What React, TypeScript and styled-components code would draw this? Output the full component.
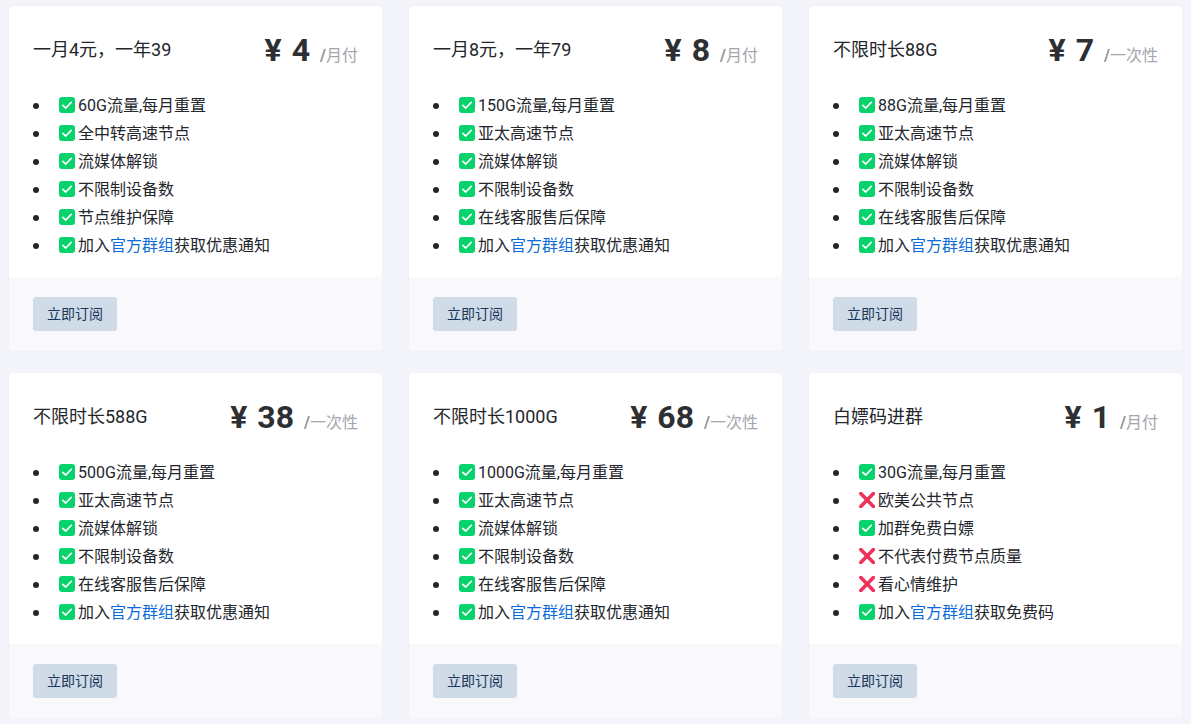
import React from "react";
import styled, { createGlobalStyle } from "styled-components";

const Global = createGlobalStyle`
  html, body { margin: 0; padding: 0; background: #f4f5fb; overflow: hidden; }
  body { font-family: Roboto, "Noto Sans CJK SC", sans-serif; color: #23262b; }
`;
const Page = styled.div`
  display: grid;
  grid-template-columns: repeat(3, 373px);
  column-gap: 27px;
  row-gap: 22px;
  padding: 6px 9px 0;
`;
const Card = styled.section`
  background: #fff;
  border-radius: 3px;
  box-shadow: 0 0 1px rgba(30, 40, 70, 0.18);
  display: flex;
  flex-direction: column;
  height: 345px;
  overflow: hidden;
`;
const Body = styled.div`
  flex: 1;
  padding: 24px 24px 0;
`;
const Header = styled.div`
  display: flex;
  justify-content: space-between;
  align-items: flex-start;
  height: 40px;
`;
const Title = styled.div`
  font-size: 18px;
  line-height: 40px;
  height: 40px;
`;
const Price = styled.div`
  display: flex;
  align-items: baseline;
  line-height: 40px;
`;
const Amount = styled.span`
  font-size: 32px;
  font-weight: 700;
  color: #2d2f33;
  word-spacing: 2px;
`;
const Period = styled.span`
  font-size: 16px;
  color: #a4a6ad;
  margin-left: 10px;
`;
const Slash = styled.span`
  font-weight: 700;
  color: #8f9198;
`;
const List = styled.ul`
  list-style: none;
  margin: 22px 0 0;
  padding: 0;
`;
const Item = styled.li`
  font-size: 16px;
  line-height: 28px;
  height: 28px;
  white-space: nowrap;
  &::before {
    content: "";
    display: inline-block;
    width: 6px;
    height: 6px;
    border-radius: 50%;
    background: #23262b;
    margin-right: 20px;
    vertical-align: 2px;
  }
`;
const Mark = styled.svg`
  width: 16px;
  height: 16px;
  margin-right: 3px;
  vertical-align: -2px;
`;
const GroupLink = styled.a`
  color: #0b6bdc;
  text-decoration: none;
`;
const Footer = styled.div`
  background: #f9f9fc;
  height: 74px;
  padding: 20px 24px 0;
  box-sizing: border-box;
`;
const Button = styled.button`
  display: block;
  width: 84px;
  height: 34px;
  border: 0;
  border-radius: 3px;
  background: #cfdbe6;
  color: #17365a;
  font-family: inherit;
  font-size: 14px;
  line-height: 32px;
  padding: 0 0 1px;
`;

const Check = () => (
  <Mark viewBox="0 0 16 16" aria-hidden>
    <rect x="0" y="0" width="16" height="16" rx="3" fill="#06d36b" />
    <path d="M3.8 8.3 6.8 11 12.2 5.3" fill="none" stroke="#fff" strokeWidth="1.7" strokeLinecap="round" strokeLinejoin="round" />
  </Mark>
);
const Cross = () => (
  <Mark viewBox="0 0 16 16" aria-hidden>
    <path d="M1.8 1.6 14.4 14.4M14.4 1.6 1.8 14.4" fill="none" stroke="#f0315c" strokeWidth="3.6" strokeLinecap="round" />
  </Mark>
);

type Feature = { no?: boolean; text: string } | { link: string };
const join = (tail: string): Feature => ({ link: tail });
const plans: { title: string; price: string; period: string; features: Feature[] }[] = [
  { title: "一月4元，一年39", price: "4", period: "月付", features: [{ text: "60G流量,每月重置" }, { text: "全中转高速节点" }, { text: "流媒体解锁" }, { text: "不限制设备数" }, { text: "节点维护保障" }, join("获取优惠通知")] },
  { title: "一月8元，一年79", price: "8", period: "月付", features: [{ text: "150G流量,每月重置" }, { text: "亚太高速节点" }, { text: "流媒体解锁" }, { text: "不限制设备数" }, { text: "在线客服售后保障" }, join("获取优惠通知")] },
  { title: "不限时长88G", price: "7", period: "一次性", features: [{ text: "88G流量,每月重置" }, { text: "亚太高速节点" }, { text: "流媒体解锁" }, { text: "不限制设备数" }, { text: "在线客服售后保障" }, join("获取优惠通知")] },
  { title: "不限时长588G", price: "38", period: "一次性", features: [{ text: "500G流量,每月重置" }, { text: "亚太高速节点" }, { text: "流媒体解锁" }, { text: "不限制设备数" }, { text: "在线客服售后保障" }, join("获取优惠通知")] },
  { title: "不限时长1000G", price: "68", period: "一次性", features: [{ text: "1000G流量,每月重置" }, { text: "亚太高速节点" }, { text: "流媒体解锁" }, { text: "不限制设备数" }, { text: "在线客服售后保障" }, join("获取优惠通知")] },
  { title: "白嫖码进群", price: "1", period: "月付", features: [{ text: "30G流量,每月重置" }, { no: true, text: "欧美公共节点" }, { text: "加群免费白嫖" }, { no: true, text: "不代表付费节点质量" }, { no: true, text: "看心情维护" }, join("获取免费码")] },
];

export default function App() {
  return (
    <Page>
      <Global />
      {plans.map((p) => (
        <Card key={p.title}>
          <Body>
            <Header>
              <Title>{p.title}</Title>
              <Price>
                <Amount>¥ {p.price}</Amount>
                <Period><Slash>/</Slash>{p.period}</Period>
              </Price>
            </Header>
            <List>
              {p.features.map((f, i) =>
                "link" in f ? (
                  <Item key={i}>
                    <Check />加入<GroupLink href="#">官方群组</GroupLink>{f.link}
                  </Item>
                ) : (
                  <Item key={i}>
                    {f.no ? <Cross /> : <Check />}{f.text}
                  </Item>
                )
              )}
            </List>
          </Body>
          <Footer>
            <Button>立即订阅</Button>
          </Footer>
        </Card>
      ))}
    </Page>
  );
}
